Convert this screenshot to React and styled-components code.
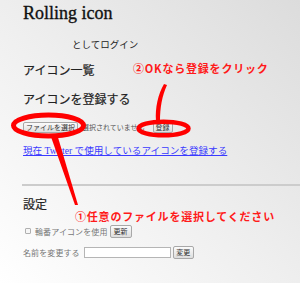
import React from "react";
import styled, { createGlobalStyle } from "styled-components";

const Global = createGlobalStyle`
  html, body { margin: 0; padding: 0; height: 100%; }
  body { background: #fff; }
`;

const Page = styled.div`
  position: relative;
  width: 300px;
  height: 283px;
  overflow: hidden;
  box-sizing: border-box;
  padding: 1px 0 0 23px;
  font-family: "Liberation Serif", "Times New Roman", "Noto Sans CJK JP", serif;
  background: linear-gradient(to top right, #ffffff 0%, #eeeeee 50%, #dcdcdc 100%);
`;

const Title = styled.h1`
  margin: 0;
  font-family: "Liberation Serif", "Times New Roman", serif;
  font-size: 18px;
  line-height: 24px;
  font-weight: normal;
  color: #111;
  -webkit-text-stroke: 0.35px #111;
`;

const Login = styled.div`
  margin: 14px 0 0 49px;
  font-size: 9.5px;
  line-height: 12px;
  color: #222;
`;

const Heading = styled.h2`
  margin: ${(p) => p.$top}px 0 0;
  font-size: 12px;
  line-height: 14px;
  font-weight: normal;
  color: #222;
  -webkit-text-stroke: 0.2px #222;
`;

const Row = styled.div`
  display: flex;
  align-items: center;
  margin-top: ${(p) => p.$top}px;
  height: ${(p) => p.$h}px;
`;

const Button = styled.button`
  box-sizing: border-box;
  height: ${(p) => p.$h || 11}px;
  width: ${(p) => p.$w}px;
  margin: 0 ${(p) => p.$mr || 0}px 0 ${(p) => p.$ml || 0}px;
  padding: 0;
  font-family: "Noto Sans CJK JP", sans-serif;
  font-size: 7px;
  line-height: 1;
  color: #333;
  background: linear-gradient(#fbfbfb, #dedede);
  border: 1px solid #a8a8a8;
  border-radius: 2px;
`;

const NoFile = styled.span`
  font-family: "Noto Sans CJK JP", sans-serif;
  font-size: 7px;
  color: #555;
  margin-left: 4px;
`;

const Link = styled.a`
  display: block;
  margin-top: 12px;
  font-family: "Liberation Serif", "Noto Sans CJK JP", serif;
  font-size: 9.6px;
  line-height: 12px;
  color: #3a3aff;
  text-decoration: underline;
`;

const Rule = styled.hr`
  margin: 27px 0 0 -1px;
  border: 0;
  height: 2px;
  background: #cccccc;
`;

const Box = styled.span`
  box-sizing: border-box;
  width: 6px;
  height: 6px;
  margin: 0 4px 0 2px;
  border: 1px solid #b0b0b0;
  border-radius: 1px;
  background: #f6f6f6;
`;

const Label = styled.span`
  font-size: 8px;
  letter-spacing: 0.1px;
  color: #777;
  margin-right: ${(p) => p.$mr || 0}px;
`;

const Input = styled.span`
  box-sizing: border-box;
  width: 87px;
  height: 11px;
  border: 1px solid #b5b5b5;
  background: #fff;
`;

const Overlay = styled.svg`
  position: absolute;
  left: 0;
  top: 0;
  pointer-events: none;
`;

const Note = styled.span`
  position: absolute;
  left: ${(p) => p.$x}px;
  top: ${(p) => p.$y}px;
  font-family: "Noto Sans CJK JP", sans-serif;
  font-size: 11px;
  line-height: 13px;
  font-weight: bold;
  letter-spacing: 0.8px;
  color: #ff1a1a;
  white-space: nowrap;
`;

export default function App() {
  return (
    <>
      <Global />
      <Page>
        <Title>Rolling icon</Title>
        <Login>としてログイン</Login>
        <Heading $top={13}>アイコン一覧</Heading>
        <Heading $top={15}>アイコンを登録する</Heading>
        <Row $top={14} $h={12}>
          <Button $w={55}>ファイルを選択</Button>
          <NoFile>選択されていません</NoFile>
          <Button $w={20} $ml={8}>登録</Button>
        </Row>
        <Link href="#">現在 Twitter で使用しているアイコンを登録する</Link>
        <Rule />
        <Heading $top={12}>設定</Heading>
        <Row $top={12} $h={14}>
          <Box />
          <Label $mr={2}>輪番アイコンを使用</Label>
          <Button $w={22} $h={13}>更新</Button>
        </Row>
        <Row $top={7} $h={14}>
          <Label $mr={4}>名前を変更する</Label>
          <Input />
          <Button $w={21} $h={13} $ml={2}>変更</Button>
        </Row>

        <Overlay width="300" height="283" viewBox="0 0 300 283">
          <ellipse cx="48.5" cy="125.5" rx="35" ry="10.5" fill="none" stroke="#ff0000" strokeWidth="5" />
          <ellipse cx="163.5" cy="128.5" rx="25" ry="6.8" fill="none" stroke="#ff0000" strokeWidth="4.5" />
          <path d="M156 121 C 155 108, 158 94, 164 84 L 167 85 C 162 96, 160 108, 160 121 Z" fill="#ff0000" />
          <path d="M50 134 L 57 134 L 78 205 L 75 205 Z" fill="#ff0000" />
        </Overlay>
        <Note $x={133} $y={62}>②OKなら登録をクリック</Note>
        <Note $x={75} $y={210}>①任意のファイルを選択してください</Note>
      </Page>
    </>
  );
}
